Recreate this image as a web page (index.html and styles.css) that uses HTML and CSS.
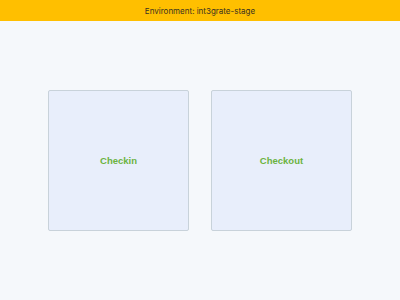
FILE: index.html
```html
<!DOCTYPE html>
<html>
<head>
<meta charset="utf-8">
<link rel="stylesheet" href="styles.css">
</head>
<body>
<div class="env-bar">Environment: int3grate-stage</div>
<main class="content">
  <div class="tiles">
    <div class="tile"><span class="tile-label">Checkin</span></div>
    <div class="tile"><span class="tile-label">Checkout</span></div>
  </div>
</main>
</body>
</html>
```
FILE: styles.css
```css
html, body {
  margin: 0;
  padding: 0;
  height: 100%;
}
body {
  background: #f5f8fb;
  font-family: Inter, "Noto Sans", sans-serif;
  display: flex;
  flex-direction: column;
}
.env-bar {
  height: 21px;
  background: #ffbf00;
  color: #3a3320;
  font-size: 8px;
  display: flex;
  align-items: center;
  justify-content: center;
  flex-shrink: 0;
}
.content {
  flex: 1;
  display: flex;
  align-items: center;
  justify-content: center;
}
.tiles {
  display: flex;
  gap: 22px;
}
.tile {
  width: 139px;
  height: 139px;
  background: #e8eefb;
  border: 1px solid #c8d2da;
  border-radius: 2px;
  display: flex;
  align-items: center;
  justify-content: center;
}
.tile-label {
  font-family: "Liberation Sans", Arial, sans-serif;
  font-weight: bold;
  font-size: 9.5px;
  color: #6cb33f;
}
```
